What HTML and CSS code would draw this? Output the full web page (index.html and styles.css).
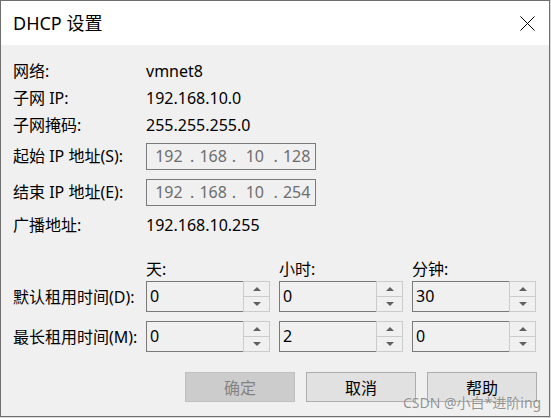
FILE: index.html
```html
<!DOCTYPE html>
<html lang="zh-CN">
  <head>
    <meta charset="UTF-8" />
    <meta name="viewport" content="width=device-width, initial-scale=1.0" />
    <title>DHCP 设置</title>
    <link rel="stylesheet" href="styles.css">
  </head>
  <body>
    <div class="window">
      <div class="titlebar">
        <span class="title">DHCP 设置</span>
        <svg class="close" width="15" height="15" viewBox="0 0 15 15">
          <path d="M0.5 0.5 L14.5 14.5 M14.5 0.5 L0.5 14.5" stroke="#000" stroke-width="1" fill="none" />
        </svg>
      </div>

      <main class="content">
        <div class="info">
          <span>网络:</span>
          <span class="value">vmnet8</span>

          <span>子网 IP:</span>
          <span class="value">192.168.10.0</span>

          <span>子网掩码:</span>
          <span class="value">255.255.255.0</span>

          <span>起始 IP 地址(S):</span>
          <div class="ip">
            <span class="seg">192</span>
            <span class="seg"><i>.</i><b>168</b></span>
            <span class="seg"><i>.</i><b>10</b></span>
            <span class="seg"><i>.</i><b>128</b></span>
          </div>

          <span>结束 IP 地址(E):</span>
          <div class="ip">
            <span class="seg">192</span>
            <span class="seg"><i>.</i><b>168</b></span>
            <span class="seg"><i>.</i><b>10</b></span>
            <span class="seg"><i>.</i><b>254</b></span>
          </div>

          <span>广播地址:</span>
          <span class="value">192.168.10.255</span>
        </div>

        <div class="lease">
          <span></span>
          <span class="col-head">天:</span>
          <span class="col-head">小时:</span>
          <span class="col-head">分钟:</span>

          <span class="row-label">默认租用时间(D):</span>
          <div class="spin"><span class="spin-value">0</span><span class="spin-btns"><span class="up"></span><span class="down"></span></span></div>
          <div class="spin"><span class="spin-value">0</span><span class="spin-btns"><span class="up"></span><span class="down"></span></span></div>
          <div class="spin"><span class="spin-value">30</span><span class="spin-btns"><span class="up"></span><span class="down"></span></span></div>

          <span class="row-label">最长租用时间(M):</span>
          <div class="spin"><span class="spin-value">0</span><span class="spin-btns"><span class="up"></span><span class="down"></span></span></div>
          <div class="spin"><span class="spin-value">2</span><span class="spin-btns"><span class="up"></span><span class="down"></span></span></div>
          <div class="spin"><span class="spin-value">0</span><span class="spin-btns"><span class="up"></span><span class="down"></span></span></div>
        </div>

        <div class="buttons">
          <button disabled>确定</button>
          <button>取消</button>
          <button>帮助</button>
        </div>
      </main>

      <span class="watermark">CSDN @小白*进阶ing</span>
    </div>
  </body>
</html>
```

FILE: styles.css
```css
/* Reset default styles */
* {
  margin: 0;
  padding: 0;
  box-sizing: border-box;
}

body {
  font-family: "Noto Sans", "Noto Sans CJK SC", sans-serif;
  font-size: 16px;
  color: #000;
  background-color: #d9d9d9;
  width: 551px;
  height: 418px;
  overflow: hidden;
}

.window {
  position: relative;
  width: 550px;
  height: 417px;
  border: 1px solid #6f6f6f;
  display: flex;
  flex-direction: column;
  background-color: #f0f0f0;
}

/* Title bar */
.titlebar {
  height: 44px;
  background-color: #fff;
  display: flex;
  align-items: center;
  justify-content: space-between;
  padding: 0 14px 0 12px;
}

.title {
  font-size: 18px;
  line-height: 24px;
}

.close {
  display: block;
  margin-top: 1px;
}

/* Body */
.content {
  flex: 1;
  padding: 0 12px 0 12px;
  line-height: 20px;
}

.info {
  display: grid;
  grid-template-columns: 133px 170px;
  grid-template-rows: 26px 27px 27px 36px 36px 30px;
  align-items: center;
  padding-top: 13px;
}

.ip {
  height: 27px;
  border: 1px solid #7a7a7a;
  display: flex;
  color: #6d6d6d;
  padding-left: 1px;
}

.seg {
  width: 42px;
  display: flex;
  align-items: center;
  justify-content: center;
}

.seg i {
  font-style: normal;
  width: 5px;
  text-align: center;
}

.seg b {
  font-weight: normal;
  flex: 1;
  text-align: center;
}

/* Lease time spinners */
.lease {
  display: grid;
  grid-template-columns: repeat(4, 124px);
  grid-template-rows: 24px 40px 40px;
  column-gap: 9px;
  padding-top: 17px;
}

.col-head {
  align-self: center;
}

.row-label {
  height: 31px;
  display: flex;
  align-items: center;
  white-space: nowrap;
}

.spin {
  height: 31px;
  display: flex;
}

.spin-value {
  flex: 1;
  border: 1px solid #7a7a7a;
  border-right: none;
  padding: 4px 0 0 3px;
}

.spin-btns {
  width: 27px;
  display: flex;
  flex-direction: column;
}

.spin-btns span {
  flex: 1;
  border: 1px solid #cbcbcb;
  display: flex;
  align-items: center;
  justify-content: center;
}

.spin-btns .down {
  border-top: none;
}

.up::after,
.down::after {
  content: "";
  width: 0;
  height: 0;
  border-left: 4px solid transparent;
  border-right: 4px solid transparent;
}

.up::after {
  border-bottom: 4px solid #606060;
}

.down::after {
  border-top: 4px solid #606060;
}

/* Dialog buttons */
.buttons {
  display: flex;
  justify-content: flex-end;
  gap: 11px;
  padding-top: 11px;
}

button {
  width: 110px;
  height: 30px;
  font-family: inherit;
  font-size: 16px;
  color: #000;
  background-color: #e1e1e1;
  border: 1px solid #adadad;
}

button:disabled {
  color: #838383;
  background-color: #cccccc;
  border-color: #bfbfbf;
}

/* CSDN watermark over the dialog */
.watermark {
  position: absolute;
  left: 402px;
  top: 391px;
  font-size: 14px;
  color: rgba(110, 110, 110, 0.75);
  text-shadow: 0 0 1px rgba(255, 255, 255, 0.8);
  white-space: nowrap;
}
```
